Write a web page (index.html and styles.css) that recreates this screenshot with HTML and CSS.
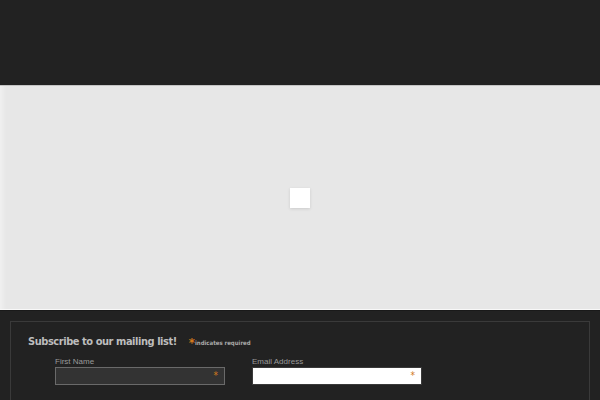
FILE: index.html
```html
<!DOCTYPE html>
<html lang="en">
<head>
    <meta charset="UTF-8">
    <meta name="viewport" content="width=device-width, initial-scale=1.0">
    <title>Mailing list</title>
    <link rel="stylesheet" href="styles.css">
</head>
<body>
    <div class="header"></div>

    <div class="stage">
        <div class="loader"></div>
    </div>

    <div class="footer">
        <div class="signup">
            <h2>Subscribe to our mailing list! <span class="req-note"><span class="asterisk">*</span>indicates required</span></h2>

            <div class="fields">
                <div class="field">
                    <label for="fname">First Name</label>
                    <div class="input-wrap dark">
                        <input type="text" id="fname">
                        <span class="asterisk">*</span>
                    </div>
                </div>
                <div class="field">
                    <label for="email">Email Address</label>
                    <div class="input-wrap">
                        <input type="email" id="email">
                        <span class="asterisk">*</span>
                    </div>
                </div>
            </div>
        </div>
    </div>
</body>
</html>
```

FILE: styles.css
```css
body {
    margin: 0;
    font-family: "DejaVu Sans Condensed", "DejaVu Sans", sans-serif;
    background-color: #222222;
}
.header {
    height: 85px;
    background-color: #222222;
    border-bottom: 1px solid #c4c4c4;
}
.stage {
    height: 223px;
    display: flex;
    align-items: center;
    justify-content: center;
    background-color: #e7e7e7;
    background-image: linear-gradient(to right, #f0f0f0 0, #e7e7e7 6px);
    border-bottom: 1px solid #f8f8f8;
}
.loader {
    width: 20px;
    height: 20px;
    background-color: #ffffff;
    box-shadow: 0 1px 3px rgba(0, 0, 0, 0.12);
}
.footer {
    padding: 10px 10px 0;
    border-top: 1px solid #1a1a1a;
}
.signup {
    border: 1px solid #3a3a3a;
    padding: 12px 17px 20px;
    height: 100px;
}
h2 {
    margin: 0;
    font-size: 11px;
    font-weight: bold;
    letter-spacing: -0.45px;
    color: #bdbdbd;
    line-height: 16px;
}
.req-note {
    margin-left: 9px;
    font-size: 6px;
    letter-spacing: 0;
    color: #aaaaaa;
}
.req-note .asterisk {
    font-size: 13px;
    vertical-align: -2px;
}
.asterisk {
    color: #d1791d;
}
.fields {
    display: flex;
    gap: 27px;
    margin: 6px 0 0 27px;
}
.field {
    width: 170px;
}
label {
    display: block;
    font-family: "Liberation Sans", Arial, sans-serif;
    font-size: 8px;
    color: #9a9a9a;
    margin-bottom: 1px;
}
.input-wrap {
    position: relative;
    height: 16px;
    border: 1px solid #3a3a3a;
    background-color: #ffffff;
}
.input-wrap.dark {
    border-color: #6a6a6a;
    background-color: #333333;
}
.input-wrap input {
    width: 100%;
    height: 100%;
    border: none;
    padding: 0;
    background: transparent;
    box-sizing: border-box;
}
.input-wrap .asterisk {
    position: absolute;
    right: 6px;
    top: 3px;
    font-size: 10px;
    line-height: 10px;
}
```
